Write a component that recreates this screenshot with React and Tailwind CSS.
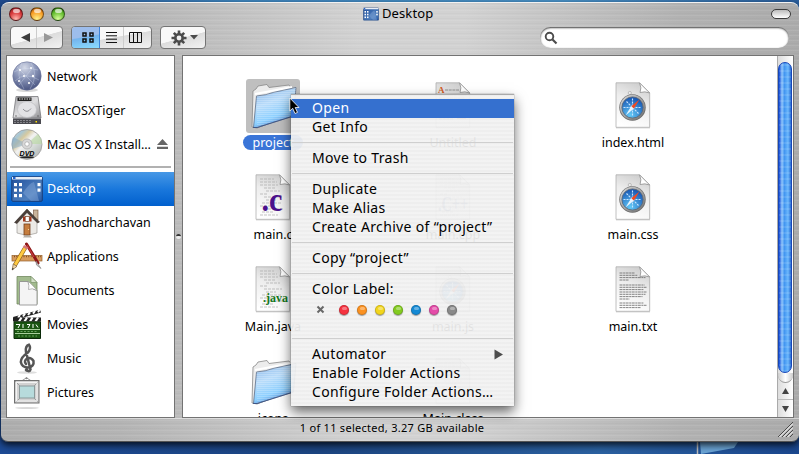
import React from 'react';

const Network = () => (
  <svg width="32" height="32" viewBox="0 0 32 32" className="shrink-0">
    <defs>
      <radialGradient id="net" cx=".42" cy=".2" r=".85">
        <stop offset="0" stopColor="#d3d8e6" />
        <stop offset=".45" stopColor="#8c97b9" />
        <stop offset="1" stopColor="#424d7b" />
      </radialGradient>
    </defs>
    <ellipse cx="16" cy="29" rx="11" ry="2" fill="#000" opacity=".15" />
    <circle cx="16" cy="15" r="14.2" fill="url(#net)" stroke="#6b749a" strokeWidth=".6" />
    <g fill="none" stroke="#dfe6f7" strokeWidth=".5" opacity=".6">
      <path d="M3 11Q12 5 27 9M4 20Q14 10 28 19M11 2Q4 14 13 28M20 2Q28 14 19 28M6 6L24 24M8 24L22 6" />
    </g>
    <g fill="#fff">
      <circle cx="9" cy="9" r="1.1" /><circle cx="20" cy="7" r="1" /><circle cx="13" cy="15" r="1" />
      <circle cx="22" cy="15" r="1.2" /><circle cx="8" cy="20" r="1" /><circle cx="18" cy="22" r="1.1" />
    </g>
  </svg>
);

const Drive = () => (
  <svg width="32" height="32" viewBox="0 0 32 32" className="shrink-0">
    <defs>
      <linearGradient id="drv" x1="0" y1="0" x2="1" y2="1">
        <stop offset="0" stopColor="#a9a9ad" /><stop offset=".5" stopColor="#dedee0" /><stop offset="1" stopColor="#909094" />
      </linearGradient>
    </defs>
    <path d="M5 1.500H27L30 23H2Z" fill="url(#drv)" stroke="#77777b" strokeWidth=".8" />
    <rect x="2" y="23.500" width="28" height="5.500" fill="#4a4a50" />
    <path d="M3 25.500H21M3 27.500H20" stroke="#85858b" strokeDasharray="2 1" />
    <rect x="24.500" y="26" width="1.500" height="1.500" fill="#ffe000" />
    <rect x="6.500" y="2.500" width="14" height="3.500" fill="#222" />
    <path d="M8 4H20" stroke="#ddd" strokeDasharray="1.500 1" />
    <ellipse cx="16" cy="14.500" rx="9.500" ry="8" fill="#e2e2e5" stroke="#bdbdc2" strokeWidth=".7" />
    <path d="M12 14Q16 19 20 13.500" fill="none" stroke="#88888d" strokeWidth=".9" />
    <circle cx="5" cy="21" r=".7" fill="#555" /><circle cx="27" cy="21" r=".7" fill="#555" />
  </svg>
);

const Dvd = () => (
  <svg width="32" height="32" viewBox="0 0 32 32" className="shrink-0">
    <defs>
      <linearGradient id="dvd" x1="0" y1="0" x2="1" y2="1">
        <stop offset="0" stopColor="#d8d8d8" /><stop offset=".2" stopColor="#a8c7d5" /><stop offset=".32" stopColor="#d5c9a0" />
        <stop offset=".45" stopColor="#f2f2f2" /><stop offset=".7" stopColor="#cdd3d0" /><stop offset="1" stopColor="#a9a9a9" />
      </linearGradient>
    </defs>
    <circle cx="16" cy="15.500" r="15" fill="url(#dvd)" stroke="#9c9c9c" strokeWidth=".8" />
    <path d="M16 15L2 8A15 15 0 0 0 1.500 20Z" fill="#7fa8c8" opacity=".5" />
    <path d="M16 15L27 5A15 15 0 0 1 31 15Z" fill="#b8d9a0" opacity=".6" />
    <circle cx="16" cy="15" r="5" fill="#d8d8d8" stroke="#aaa" strokeWidth=".7" />
    <circle cx="16" cy="15" r="2.200" fill="#fff" stroke="#999" strokeWidth=".6" />
    <text x="8.500" y="26.500" fontFamily="Liberation Sans, sans-serif" fontSize="6.500" fontStyle="italic" fontWeight="bold" textLength="15" lengthAdjust="spacingAndGlyphs">DVD</text>
    <ellipse cx="16" cy="28.200" rx="7" ry="1" fill="#222" />
  </svg>
);

const DesktopIcon = ({ size = 32 }) => (
  <svg width={size} height={size} viewBox="0 0 32 32" className="shrink-0">
    <defs>
      <linearGradient id="dsk" x1="0" y1="0" x2="1" y2="1">
        <stop offset="0" stopColor="#204f9b" /><stop offset=".7" stopColor="#4f80be" /><stop offset="1" stopColor="#2456a3" />
      </linearGradient>
    </defs>
    <rect x=".8" y="3.800" width="30.500" height="24.500" rx="1" fill="url(#dsk)" stroke="#193d78" />
    <rect x="1" y="4" width="30" height="2.500" fill="#e8edf5" />
    <rect x="2" y="4" width="2.500" height="2" fill="#2262cc" />
    <path d="M12 20Q18 10 23 9L28 28H20Z" fill="#8fb0dc" opacity=".4" />
    <g fill="#fff">
      <rect x="3" y="10" width="3" height="3.200" /><rect x="8" y="10" width="3" height="3.200" />
      <rect x="3" y="15.500" width="3" height="3.200" /><rect x="8" y="15.500" width="3" height="3.200" />
      <rect x="3" y="21" width="3" height="3.200" /><rect x="8" y="21" width="3" height="3.200" />
      <rect x="26.500" y="10" width="3" height="3.200" /><rect x="26.500" y="15.500" width="3" height="3.200" />
    </g>
  </svg>
);

const Home = () => (
  <svg width="32" height="32" viewBox="0 0 32 32" className="shrink-0">
    <rect x="22.500" y="3" width="4.500" height="10" fill="#c9b49c" stroke="#6b4a35" strokeWidth=".6" />
    <path d="M6 13L16 5L26 13V26L16 28.500L6 26Z" fill="#eceae6" stroke="#8f8c86" strokeWidth=".6" />
    <path d="M3.500 15.500L16 2L28.500 15L26.500 16L16 5.500L6 16.500Z" fill="#4b403a" stroke="#2c2420" strokeWidth=".5" />
    <rect x="12" y="9.500" width="8.500" height="5" fill="#a5341a" />
    <rect x="14.200" y="9.500" width="4" height="5" fill="#fff" stroke="#6f4122" strokeWidth=".6" />
    <rect x="13" y="17" width="6" height="11" fill="#c57d3e" stroke="#76401c" strokeWidth=".8" />
    <circle cx="17.500" cy="22.500" r=".6" fill="#ffe19c" />
    <path d="M12 30.500L13.500 28.500H19L21 30.500Z" fill="#b5b1aa" />
  </svg>
);

const Apps = () => (
  <svg width="32" height="32" viewBox="0 0 32 32" className="shrink-0">
    <rect x="1" y="14.500" width="30" height="5.500" fill="#d89b5c" stroke="#95602d" strokeWidth=".7" />
    <path d="M3 15.500H30" stroke="#704018" strokeWidth="1.500" strokeDasharray=".8 1.600" />
    <path d="M15.500 3L27 22" stroke="#8d1515" strokeWidth="3" strokeLinecap="round" />
    <path d="M16 4L23 16" stroke="#c94040" strokeWidth="1.100" />
    <path d="M25 20L30 27.500L25.500 24Z" fill="#c8c8c8" stroke="#777" strokeWidth=".6" />
    <path d="M14 7L4 24" stroke="#8b5b13" strokeWidth="4.200" />
    <path d="M14 7L4 24" stroke="#ffca42" strokeWidth="3" />
    <path d="M2.200 23L1.200 29L6 25.300Z" fill="#efd6a8" stroke="#654420" strokeWidth=".6" />
    <path d="M1.500 27L1.200 29L3 27.800Z" fill="#222" />
    <path d="M12.500 5L16.500 7.500" stroke="#d67777" strokeWidth="2.500" />
  </svg>
);

const Docs = () => (
  <svg width="32" height="32" viewBox="0 0 32 32" className="shrink-0">
    <path d="M6 1.500H20L26 7.500V29H6Z" fill="#a2bb8e" stroke="#71895f" strokeWidth=".8" />
    <path d="M20 1.500V7.500H26Z" fill="#d5e1ca" stroke="#71895f" strokeWidth=".6" />
    <path d="M8.500 6.500H17Q18 13 26 15.500V30H8.500Z" fill="#f4f4f4" stroke="#888" strokeWidth=".8" />
    <path d="M17 6.500Q20 8 26 15.500Q21 12.500 17.500 14.500Q18.500 11 17 6.500Z" fill="#fff" stroke="#999" strokeWidth=".7" />
  </svg>
);

const Movies = () => (
  <svg width="32" height="32" viewBox="0 0 32 32" className="shrink-0">
    <path d="M2 8L29 .8L30 3.500L3.500 11Z" fill="#222" />
    <path d="M7 8.800L9 6M12 7.500L14 4.700M17 6L19 3.300M22 4.700L24 2M27 3.300L28.500 1" stroke="#fff" strokeWidth="2" />
    <path d="M2 8.500H30V12.500H2Z" fill="#222" />
    <path d="M8 12.500L10.500 8.500M13.500 12.500L16 8.500M19 12.500L21.500 8.500M24.500 12.500L27 8.500" stroke="#fff" strokeWidth="2.200" />
    <path d="M3 12.800H29.500V29.500H3Z" fill="#1b5612" stroke="#0a2908" />
    <path d="M4 20.500H29M4 24.500H29" stroke="#a8cf9c" />
    <path d="M5 15.500H9L7 19M12 15V19M16 15.500H19L17 19M22 15V19M25 15.500L27 18.500" stroke="#fff" fill="none" />
    <path d="M6 22.500H27M7 27H26" stroke="#68a25d" strokeDasharray="2 1.500" />
  </svg>
);

const Music = () => (
  <svg width="32" height="32" viewBox="0 0 32 32" className="shrink-0">
    <ellipse cx="16" cy="29.500" rx="10" ry="1.300" fill="#000" opacity=".13" />
    <g fill="none" stroke="#555" strokeLinecap="round">
      <path d="M15.500 26.500Q18 30 19.500 26.500L15 9Q14 3 18 1.800Q20.500 5 17 9.500Q10 14 9.800 19Q11 24.500 17 24.500Q23.500 23.500 22.500 18Q20 14 16 15.500Q12.500 18 15 21" strokeWidth="2.500" />
      <circle cx="15.500" cy="27" r="1.300" fill="#555" />
    </g>
  </svg>
);

const Pictures = () => (
  <svg width="32" height="32" viewBox="0 0 32 32" className="shrink-0">
    <ellipse cx="16" cy="31" rx="12" ry=".9" fill="#000" opacity=".15" />
    <path d="M10.500 4L15.500 .8L20.500 4" fill="none" stroke="#999" />
    <circle cx="15.500" cy="1.300" r="1" fill="#888" />
    <rect x="3.500" y="3.500" width="24.500" height="22.500" fill="#d2d2d2" stroke="#707070" />
    <path d="M4 4L9 9M28 4L23 9M4 26L9 21M28 26L23 21" stroke="#888" strokeWidth=".7" />
    <rect x="5.500" y="5.500" width="20.500" height="18.500" fill="none" stroke="#f4f4f4" />
    <rect x="8.500" y="9" width="15" height="12" fill="#b7dbdc" stroke="#8b9a9b" />
  </svg>
);

const Folder = () => (
  <svg width="48" height="48" viewBox="0 0 48 48">
    <defs>
      <linearGradient id="fld" x1="0" y1="0" x2=".4" y2="1">
        <stop offset="0" stopColor="#82b0e6" /><stop offset=".45" stopColor="#b9dcfa" /><stop offset=".8" stopColor="#8dd0ff" /><stop offset="1" stopColor="#5b8fd2" />
      </linearGradient>
      <pattern id="rule" width="3" height="2" patternUnits="userSpaceOnUse"><path d="M0 .5H3" stroke="#fff" strokeWidth=".6" opacity=".35" /></pattern>
    </defs>
    <path d="M3 45L4 9L7 7L9 4L18 2.500L20 5.500L40 3L42 6V33L8 46Z" fill="#ececec" stroke="#888" strokeWidth=".8" />
    <path d="M6 12L22 9L43 5" fill="none" stroke="#fff" strokeWidth="2" />
    <path d="M7.500 14Q18 13 24 10.500L47 5.500L44.500 34L8 45.500L4.500 45.500Z" fill="url(#fld)" stroke="#5d6d87" strokeWidth=".8" />
    <path d="M7.500 14Q18 13 24 10.500L47 5.500L44.500 34L8 45.500Z" fill="url(#rule)" />
    <path d="M4 45.500L8 45.500L44.500 34" fill="none" stroke="#27407b" strokeWidth="1.100" opacity=".6" />
  </svg>
);

const codeLines = [[5, 5, 14], [5, 8, 17], [5, 11, 18], [9, 14, 12], [11, 17, 14], [5, 20, 8], [9, 23, 18], [11, 26, 10], [7, 29, 20], [5, 32, 14], [9, 35, 19], [7, 38, 11], [5, 41, 18]];
const textLines = [[7, 15], [9.3, 18], [11.600, 26], [14, 9], [19, 25], [21.300, 27], [23.600, 24], [26, 27], [28.300, 26], [30.600, 23], [33, 10], [37, 24], [39.300, 27], [41.600, 21]];

const Doc = ({ kind }) => (
  <svg width="48" height="48" viewBox="0 0 48 48">
    <defs>
      <linearGradient id="pg" x1=".6" y1="0" x2=".3" y2="1">
        <stop offset="0" stopColor="#cfcfcf" /><stop offset=".4" stopColor="#ededed" /><stop offset="1" stopColor="#fff" />
      </linearGradient>
      <radialGradient id="saf" cx=".4" cy=".85" r=".8">
        <stop offset="0" stopColor="#63c9f7" /><stop offset="1" stopColor="#1959b5" />
      </radialGradient>
      <linearGradient id="rim" x1="0" y1="0" x2="1" y2="1">
        <stop offset="0" stopColor="#d9d9d9" /><stop offset="1" stopColor="#6f6f6f" />
      </linearGradient>
    </defs>
    <path d="M7 1.500H30.500L41 12V46.500H7Z" fill="#000" opacity=".14" />
    <path d="M7 .8H30.500L40.700 11V45.300H7Z" fill="url(#pg)" stroke="#b0b0b0" strokeWidth=".8" />
    {kind === 'text' && textLines.map(([y, w], i) => <path key={i} d={`M10.500 ${y}h${w}`} stroke="#666" strokeWidth=".8" strokeDasharray="3 .6 2 .5" />)}
    {(kind === 'c' || kind === 'java' || kind === 'cpp' || kind === 'class') && codeLines.map(([x, y, w], i) => <path key={i} d={`M${x + 6} ${y}h${w}`} stroke="#aaa" strokeWidth=".7" strokeDasharray="3 1" />)}
    {kind === 'rtf' && (
      <g>
        <text x="9" y="11" fontFamily="Liberation Serif, serif" fontSize="9" fontWeight="bold" fill="#d15b1c">A</text>
        <path d="M16 8H30M10 13H37M10 16H36M10 19H34M10 22H37M10 25H33M10 28H30M10 31H26M10 37H24" stroke="#888" strokeWidth=".9" strokeDasharray="3 .7" />
        <rect x="28" y="28" width="9" height="9" fill="#d77a45" />
      </g>
    )}
    <path d="M30.500 .8Q33 6 31 10.500Q36 9 40.700 11Z" fill="#fff" stroke="#999" strokeWidth=".9" />
    {kind === 'web' && (
      <g>
        <circle cx="20.800" cy="11" r="1.600" fill="#eee" stroke="#aaa" strokeWidth=".7" />
        <circle cx="23.500" cy="25.500" r="13.200" fill="#6a6a6a" />
        <circle cx="23.500" cy="25.300" r="12.500" fill="url(#rim)" />
        <circle cx="23.500" cy="25.500" r="10.600" fill="url(#saf)" stroke="#5b6674" strokeWidth=".8" />
        <path d="M23.500 16.500V34.500M14.500 25.500H32.500M17.500 19.500L29.500 31.500" stroke="#c6e4ff" strokeWidth="1.100" strokeDasharray="2 1" />
        <path d="M30.500 17.500L24.800 26.800L22.200 24.300Z" fill="#f04a22" />
        <path d="M16.500 33.500L22.200 24.300L24.800 26.800Z" fill="#e8f4ff" />
      </g>
    )}
    {kind === 'c' && <text x="12.500" y="37" fontFamily="Liberation Serif, serif" fontSize="34" fontWeight="bold" fill="#4b118c" textLength="21" lengthAdjust="spacingAndGlyphs">.c</text>}
    {kind === 'cpp' && <text x="9" y="37" fontFamily="Liberation Serif, serif" fontSize="22" fontWeight="bold" fill="#6678a8" textLength="30" lengthAdjust="spacingAndGlyphs">.C++</text>}
    {kind === 'java' && <text x="14" y="36" fontFamily="Liberation Serif, serif" fontSize="13" fontWeight="bold" fill="#15781b" textLength="25" lengthAdjust="spacingAndGlyphs">.java</text>}
  </svg>
);

const sideItems = [
  ['Network', Network], ['MacOSXTiger', Drive], ['Mac OS X Install…', Dvd], null, ['Desktop', DesktopIcon], ['yashodharchavan', Home],
  ['Applications', Apps], ['Documents', Docs], ['Movies', Movies], ['Music', Music], ['Pictures', Pictures],
];

const files = [
  ['project', 'folder'], ['Untitled', 'rtf'], ['index.html', 'web'],
  ['main.c', 'c'], ['main.cpp', 'cpp'], ['main.css', 'web'],
  ['Main.java', 'java'], ['main.js', 'web'], ['main.txt', 'text'],
  ['icons', 'folder'], ['Main.class', 'class'],
];

const menu = ['Open', 'Get Info', '-', 'Move to Trash', '-', 'Duplicate', 'Make Alias', 'Create Archive of “project”', '-', 'Copy “project”', '-', 'Color Label:', 'colors', '-', 'Automator', 'Enable Folder Actions', 'Configure Folder Actions…'];

const dots = ['bg-[#f5323f]', 'bg-[#fb9120]', 'bg-[#f2d51c]', 'bg-[#83cb20]', 'bg-[#1489d4]', 'bg-[#e44ba8]', 'bg-[#898989]'];
const lights = ['bg-[radial-gradient(circle_at_50%_90%,#ffb9b0,#d8383b_55%,#8d1c20)]', 'bg-[radial-gradient(circle_at_50%_90%,#fff28a,#f79a22_60%,#9c4c0a)]', 'bg-[radial-gradient(circle_at_50%_90%,#d8ff9a,#5fb92b_60%,#255e10)]'];

function MenuRow({ item }) {
  if (item === '-') return <div className="h-3 pt-[5px]"><div className="mx-px h-px bg-[#cfcfcf]" /></div>;
  if (item === 'colors') {
    return (
      <div className="flex h-[34px] items-start pt-[6px] pl-[25px]">
        <svg width="9" height="9" viewBox="0 0 9 9" className="mr-[14px]"><path d="M1.500 1.500L7.500 7.500M7.500 1.500L1.500 7.500" stroke="#686868" strokeWidth="2" /></svg>
        <div className="flex gap-2">
          {dots.map((d) => <div key={d} className={`size-[10px] overflow-hidden rounded-full border border-black/15 shadow-[0_1px_1px_rgba(0,0,0,.35)] ${d}`}><div className="mx-auto mt-px h-[3px] w-[5px] rounded-full bg-white/35" /></div>)}
        </div>
      </div>
    );
  }
  return (
    <div className={`flex h-[19px] items-center justify-between pr-[11px] pl-[21px] text-[14px] leading-[17px] tracking-[0.33px] whitespace-nowrap ${item === 'Open' ? 'bg-[#3570cf] text-white' : 'text-black'}`}>
      <span className="pb-[2px]">{item}</span>
      {item === 'Automator' && <svg width="9" height="11" viewBox="0 0 9 11"><path d="M.5 .5L9 5.500L.5 10.500Z" fill="#4c4c4c" /></svg>}
    </div>
  );
}

export default function App() {
  return (
    <div className="relative h-[454px] w-[799px] overflow-hidden bg-[linear-gradient(90deg,#1f4a8e,#3f86bf_30%,#4a93c9_70%,#2b5f9d)] font-['Noto_Sans',sans-serif] text-black">
      <div className="absolute bottom-0 left-0 h-4 w-full bg-[linear-gradient(90deg,#1d4a94,#1c4480_40%,#2b61a0_75%,#1b478e)]" />
      <svg className="absolute bottom-0 left-[696px]" width="45" height="12"><path d="M1.500 0V12" stroke="#bbb" strokeWidth="1.500" /><path d="M4 0H42L38 6L5 12Z" fill="#6aa3d4" /></svg>
      <div className="absolute top-[2px] left-px flex h-[440px] w-[798px] flex-col rounded-t-[8px] rounded-b-[7px] border-t border-b border-t-[#f2f2f2] border-b-[#555] bg-[repeating-linear-gradient(0deg,rgba(255,255,255,.08)_0px,rgba(255,255,255,.08)_1px,transparent_1px,transparent_2px,rgba(0,0,0,.02)_2px,rgba(0,0,0,.02)_3px,transparent_3px,transparent_5px),linear-gradient(90deg,#adadad,#b4b4b4_15%,#d2d2d2_45%,#d2d2d2_58%,#b2b2b2_85%,#ababab)] shadow-[0_3px_7px_rgba(0,0,0,.8)]">
        <div className="flex h-[22px] items-center pr-2 pl-2">
          <div className="flex w-[351px] gap-[7px]">
            {lights.map((l) => <div key={l} className={`size-[14px] rounded-full border border-black/50 ${l}`}><div className="mx-auto mt-px h-1 w-[7px] rounded-full bg-white/65" /></div>)}
          </div>
          <div className="flex items-center gap-[3px] pl-[3px] text-[13px] leading-[18px] tracking-[0.1px]">
            <DesktopIcon size={16} />
            <span className="pb-[2px]">Desktop</span>
          </div>
          <div className="ml-auto h-[10px] w-5 rounded-full border-[1.5px] border-[#3c3c3c] bg-[linear-gradient(#bbb,#fff)]" />
        </div>
        <div className="flex h-[30px] items-start pl-[9px]">
          <div className="mt-px flex h-[23px] w-[53px] overflow-hidden rounded-[4px] border border-[#747474] bg-[linear-gradient(165deg,#f8f8f8_50%,#dcdcdc_52%,#f2f2f2)]">
            <div className="flex w-[26px] items-center justify-center border-r border-[#ccc] pl-[3px]"><svg width="9" height="9"><path d="M9 0V9L0 4.500Z" fill="#3d3d3d" /></svg></div>
            <div className="flex flex-1 items-center justify-center pr-[3px]"><svg width="9" height="9"><path d="M0 0V9L9 4.500Z" fill="#999" /></svg></div>
          </div>
          <div className="mt-px ml-[8px] flex h-[23px] w-[81px] overflow-hidden rounded-[4px] border border-[#747474] bg-[linear-gradient(170deg,#f8f8f8_50%,#dcdcdc_52%,#f2f2f2)]">
            <div className="flex w-[28px] items-center justify-center border-r border-[#3d83d8] bg-[linear-gradient(170deg,#9dbdec_45%,#74b4ee_50%,#8adcff)] pl-1">
              <svg width="12" height="11" fill="none" stroke="#111" strokeWidth="1.500"><rect x="1" y="1" width="3" height="3" /><rect x="8" y="1" width="3" height="3" /><rect x="1" y="7" width="3" height="3" /><rect x="8" y="7" width="3" height="3" /></svg>
            </div>
            <div className="flex w-6 items-center justify-center border-r border-[#ccc]"><svg width="11" height="11"><path d="M0 .5H11M0 3.800H11M0 7.200H11M0 10.500H11" stroke="#111" /></svg></div>
            <div className="flex flex-1 items-center justify-center pr-1"><svg width="14" height="11" fill="none" stroke="#111"><path d="M.5 .5H12.500V10.500H.5ZM4.500 0V11M8.500 0V11" /></svg></div>
          </div>
          <div className="mt-px ml-[8px] flex h-[23px] w-[46px] items-center gap-[3px] rounded-[4px] border border-[#747474] bg-[linear-gradient(165deg,#f8f8f8_50%,#dcdcdc_52%,#f2f2f2)] pl-[10px]">
            <svg width="16" height="16" viewBox="-8 -8 16 16">
              <g stroke="#4b4b4b" strokeWidth="2.600"><path d="M0 -7.500V7.500M-7.500 0H7.500M-5.200 -5.200L5.200 5.200M5.200 -5.200L-5.200 5.200" /></g>
              <circle r="5" fill="#4b4b4b" /><circle r="2.400" fill="#eee" />
            </svg>
            <svg width="8" height="5"><path d="M0 0H8L4 4.500Z" fill="#4b4b4b" /></svg>
          </div>
          <div className="mt-[2px] mr-[10px] ml-auto flex h-[21px] w-[249px] items-center rounded-full bg-white pl-1 shadow-[inset_0_1px_2px_rgba(0,0,0,.75)]">
            <svg width="14" height="14" fill="none" stroke="#4b4b4b"><circle cx="5.500" cy="5.500" r="3.800" strokeWidth="1.900" /><path d="M8.500 8.500L12.500 12.500" strokeWidth="2.200" /></svg>
          </div>
        </div>
        <div className="flex h-[363px] pl-[5px]">
          <div className="w-[169px] border border-[#737373] bg-white text-[12.5px]">
            <div className="h-[4px]" />
            {sideItems.map((it) => {
              if (!it) return <div key="rule" className="h-[10px] px-[3px] pt-[4px]"><div className="h-[2px] w-full bg-[#b1b1b1]" /></div>;
              const [label, Icon] = it;
              return (
                <div key={label} className={`flex h-[34px] items-center pr-[6px] pl-[4px] ${label === 'Desktop' ? 'bg-[linear-gradient(#4798e6,#1a78dc_50%,#005fcd)] text-white' : ''}`}>
                  <Icon />
                  <span className="ml-[4px] flex-1 whitespace-nowrap">{label}</span>
                  {label.startsWith('Mac OS') && <svg width="11" height="10" className="mb-[2px]"><path d="M5.500 0L11 6H0ZM0 7.800H11V10H0Z" fill="#666" /></svg>}
                </div>
              );
            })}
          </div>
          <div className="flex w-[7px] items-center justify-center"><div className="size-[5px] rounded-full border-t-2 border-[#333] bg-[#eee]" /></div>
          <div className="flex w-[612px] border border-[#737373] bg-white">
            <div className="grid h-[361px] flex-1 auto-rows-[92px] grid-cols-[180px_180px_180px] overflow-hidden pt-[23px]">
              {files.map(([name, kind], i) => (
                <div key={name} className="flex flex-col items-center">
                  <div className={`flex size-[54px] items-center justify-center rounded-[3px] ${i === 0 ? 'bg-[#bfbfbf]' : ''}`}>{kind === 'folder' ? <Folder /> : <Doc kind={kind} />}</div>
                  <div className={`mt-[2px] h-[15px] rounded-full px-[10px] text-[12.5px] leading-[15px] ${i === 0 ? 'bg-[#3a75d8] text-white' : ''}`}>{name}</div>
                </div>
              ))}
            </div>
            <div className="flex w-[16px] flex-col border-l border-[#aaa] bg-[linear-gradient(90deg,#ddd,#fff)]">
              <div className="mt-[6px] h-[311px] w-[14px] rounded-full border border-[#1746b8] bg-[repeating-linear-gradient(0deg,rgba(255,255,255,.1)_0px,rgba(255,255,255,.1)_2px,transparent_2px,transparent_6px),linear-gradient(90deg,#0e49d6,#8fc5fb_25%,#4295f0_45%,#6cb8fd_75%,#266bd2)]" />
              <div className="h-[10px] rounded-b-full border-b border-[#999] bg-[linear-gradient(90deg,#ccc,#fff_50%,#ccc)]" />
              <div className="flex h-[17px] items-center justify-center border-b border-[#bbb]"><svg width="7" height="6"><path d="M3.500 0L7 6H0Z" fill="#444" /></svg></div>
              <div className="flex flex-1 items-center justify-center"><svg width="7" height="6"><path d="M0 0H7L3.500 6Z" fill="#444" /></svg></div>
            </div>
          </div>
        </div>
        <div className="relative flex flex-1 items-start justify-center border-t border-white/50 pt-px pr-[16px] text-[11px] leading-[16px] tracking-[0.28px]">
          <span>1 of 11 selected, 3.27 GB available</span>
          <svg className="absolute right-[6px] bottom-[4px]" width="15" height="15"><path d="M0 15L15 0M4 15L15 4M8 15L15 8M12 15L15 12" stroke="#4b4b4b" /><path d="M1.500 15L15 1.500M5.500 15L15 5.500M9.500 15L15 9.500" stroke="#fff" /></svg>
        </div>
      </div>
      <div className="absolute top-[94px] left-[291px] w-[223px] border-t border-[#aaa] bg-[repeating-linear-gradient(0deg,rgba(242,242,242,.94)_0px,rgba(242,242,242,.94)_2px,rgba(237,237,237,.94)_2px,rgba(237,237,237,.94)_4px)] py-1 shadow-[0_6px_12px_rgba(0,0,0,.6),0_0_1px_rgba(0,0,0,.5)]">
        {menu.map((m, i) => <MenuRow key={i} item={m} />)}
      </div>
      <svg className="absolute top-[97px] left-[289px]" width="11" height="18" viewBox="0 0 11 18"><path d="M.8 1V14L3.700 11.300L6 16.500L8.500 15.400L6.200 10.500H10Z" fill="#000" stroke="#fff" strokeWidth=".8" /></svg>
    </div>
  );
}
